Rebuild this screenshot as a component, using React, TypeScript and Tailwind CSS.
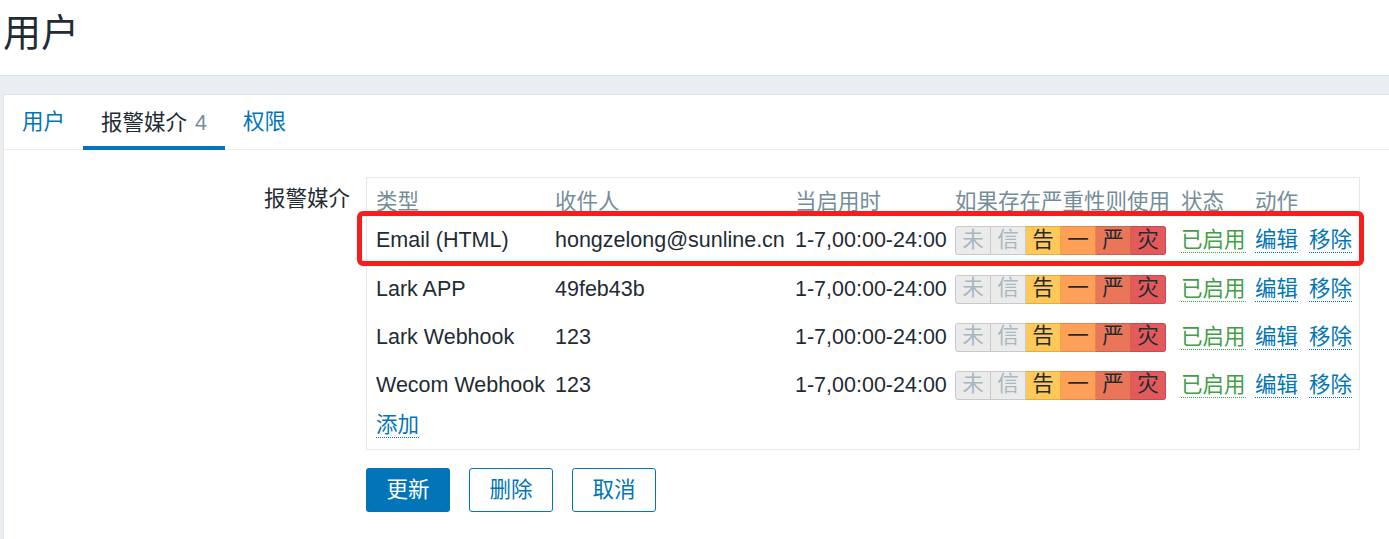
import React from "react";

const font = "font-['Liberation_Sans','Noto_Sans_CJK_SC',sans-serif]";

type Media = { type: string; to: string; when: string };

const media: Media[] = [
  { type: "Email (HTML)", to: "hongzelong@sunline.cn", when: "1-7,00:00-24:00" },
  { type: "Lark APP", to: "49feb43b", when: "1-7,00:00-24:00" },
  { type: "Lark Webhook", to: "123", when: "1-7,00:00-24:00" },
  { type: "Wecom Webhook", to: "123", when: "1-7,00:00-24:00" },
];

const severities = [
  { label: "未", cls: "w-[36px] border-l rounded-l-[3px] bg-[#ebebeb] border-[#c9c9c9] text-[#a9b7be]" },
  { label: "信", cls: "w-[35px] bg-[#ebebeb] border-[#c9c9c9] text-[#a9b7be]" },
  { label: "告", cls: "w-[35px] bg-[#ffc859] border-[#e0ac48] text-[#1f2c33]" },
  { label: "一", cls: "w-[35px] bg-[#ffa059] border-[#e08a4b] text-[#1f2c33]" },
  { label: "严", cls: "w-[35px] bg-[#e97659] border-[#cc644c] text-[#1f2c33]" },
  { label: "灾", cls: "w-[35px] rounded-r-[3px] bg-[#e45959] border-[#c84b4b] text-[#1f2c33]" },
];

function SeverityBar() {
  return (
    <div className="flex h-[29px]">
      {severities.map((s) => (
        <span
          key={s.label}
          className={`flex items-center justify-center border-y border-r leading-none ${s.cls}`}
        >
          {s.label}
        </span>
      ))}
    </div>
  );
}

function DottedLink({ children, green }: { children: React.ReactNode; green?: boolean }) {
  return (
    <span
      className={
        green
          ? "border-b border-dotted border-[#429e47] leading-[24px] text-[#429e47]"
          : "border-b border-dotted border-[#0275b8] leading-[24px] text-[#0275b8]"
      }
    >
      {children}
    </span>
  );
}

const cols = "grid grid-cols-[179px_240px_160px_226px_74px_1fr]";

export default function App() {
  return (
    <div className={`relative h-[539px] w-[1389px] overflow-hidden bg-white text-[21.5px] text-[#1f2c33] ${font}`}>
      <header className="h-[75px] pl-[3px] pt-[13px]">
        <h1 className="text-[38px] leading-[40px]">用户</h1>
      </header>

      <div className="border-t border-[#dfe4e7] bg-[#ebeef0] pl-[3px] pt-[18px]">
        <div className="h-[450px] border-l border-t border-[#dfe4e7] bg-white">
          <nav className="flex h-[55px] border-b border-[#ebeef0]">
            <a className="flex items-center px-[18px] pt-[1px] text-[#0275b8]">用户</a>
            <a className="-mb-px flex items-center border-b-4 border-[#0275b8] px-[18px] pt-[5px]">
              报警媒介<span className="ml-[8px] text-[#768d99]">4</span>
            </a>
            <a className="flex items-center px-[18px] pt-[1px] text-[#0275b8]">权限</a>
          </nav>

          <div className="pt-[27px]">
            <div className="flex gap-[16px]">
              <div className="w-[346px] pt-[10px] text-right leading-[24px]">报警媒介</div>
              <div className="w-[994px] border border-[#e4e8ea] pb-[8px] pl-[9px]">
                <div className={`${cols} h-[38px] pt-[12px] leading-[24px] text-[#768d99]`}>
                  <span>类型</span>
                  <span>收件人</span>
                  <span>当启用时</span>
                  <span>如果存在严重性则使用</span>
                  <span>状态</span>
                  <span>动作</span>
                </div>
                {media.map((m, i) => (
                  <div key={m.type} className={`${cols} ${i === 0 ? "h-[49px]" : "h-[48px]"} items-center`}>
                    <span className="whitespace-nowrap">{m.type}</span>
                    <span className="whitespace-nowrap">{m.to}</span>
                    <span className="whitespace-nowrap">{m.when}</span>
                    <SeverityBar />
                    <span>
                      <DottedLink green>已启用</DottedLink>
                    </span>
                    <span className="flex gap-[11px]">
                      <DottedLink>编辑</DottedLink>
                      <DottedLink>移除</DottedLink>
                    </span>
                  </div>
                ))}
                <div className="flex h-[32px] items-center">
                  <DottedLink>添加</DottedLink>
                </div>
              </div>
            </div>

            <div className="ml-[362px] mt-[18px] flex gap-[19px]">
              <button className="h-[44px] w-[84px] rounded-[3px] bg-[#0275b8] text-white">更新</button>
              <button className="h-[44px] w-[84px] rounded-[3px] border border-[#0275b8] text-[#0275b8]">删除</button>
              <button className="h-[44px] w-[84px] rounded-[3px] border border-[#0275b8] text-[#0275b8]">取消</button>
            </div>
          </div>
        </div>
      </div>

      {/* annotation box drawn over the first media row */}
      <div className="pointer-events-none absolute left-[357px] top-[211px] h-[55px] w-[1007px] rounded-[6px] border-[5px] border-[#f81d1a]" />
    </div>
  );
}
